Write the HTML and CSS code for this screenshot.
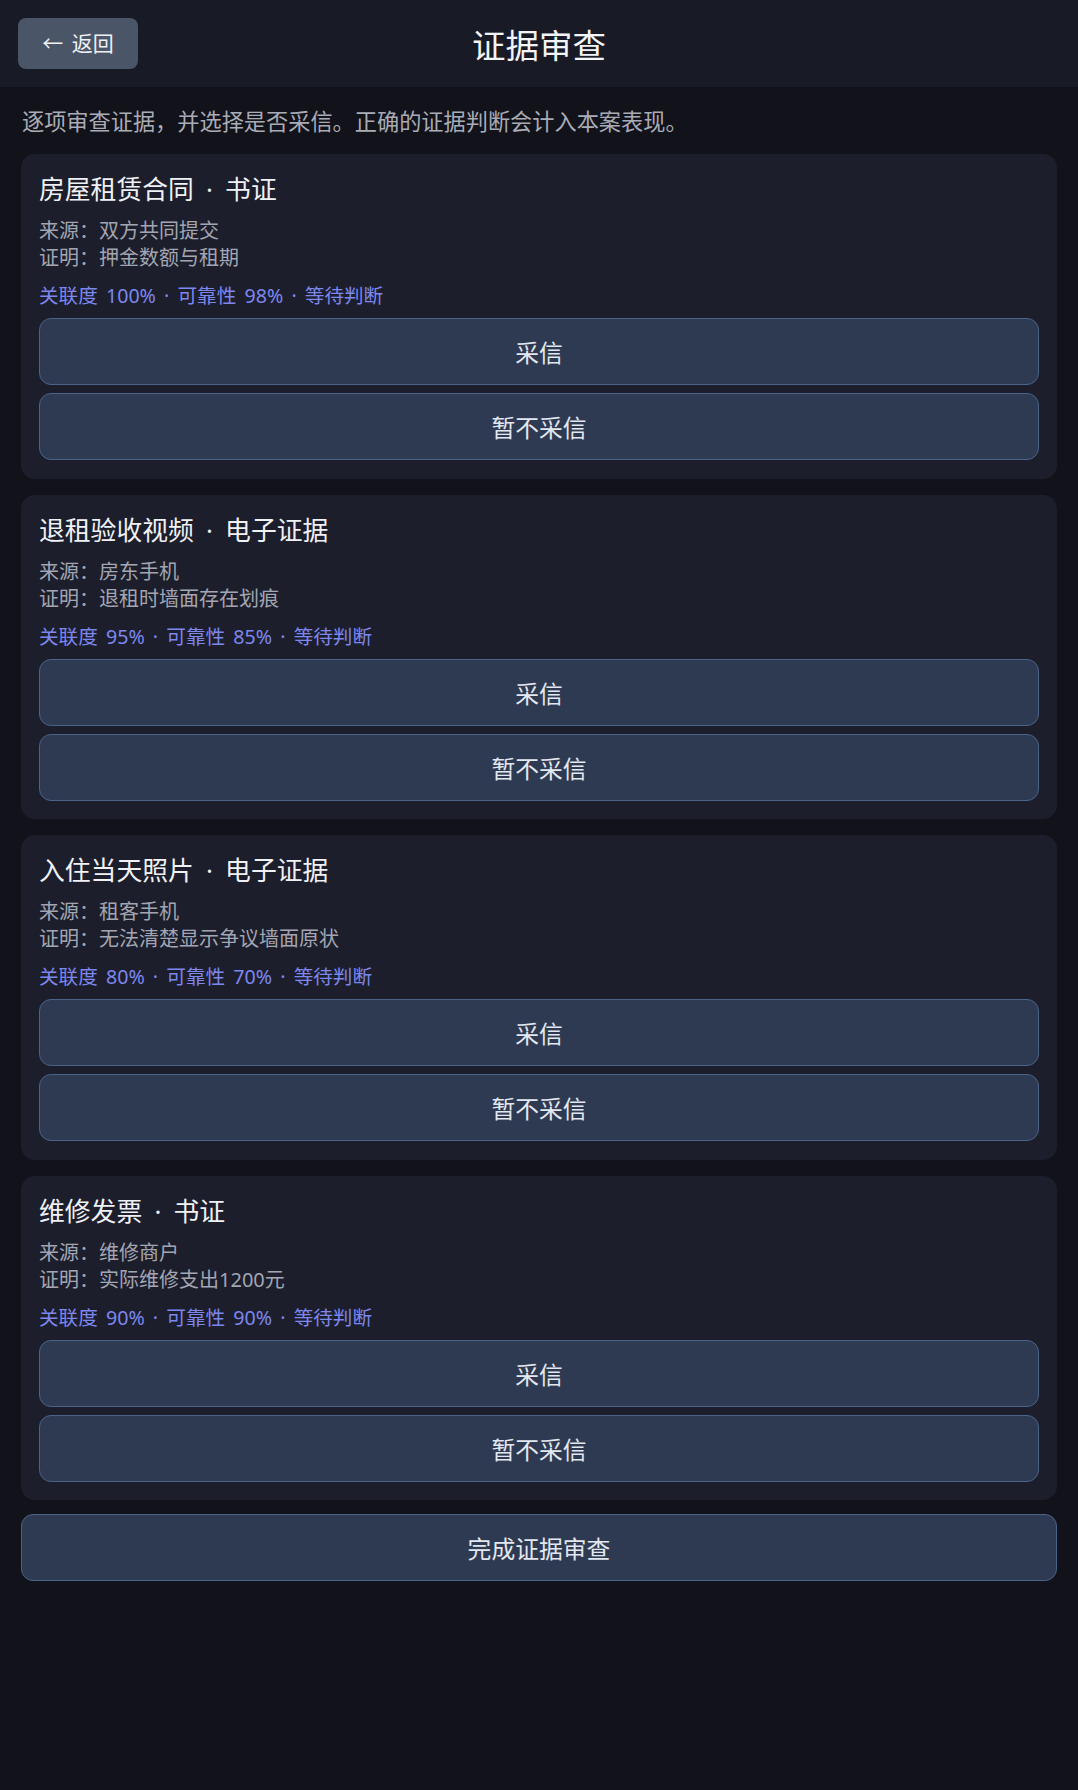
FILE: index.html
```html
<!DOCTYPE html>
<html lang="zh-CN">
<head>
<meta charset="utf-8">
<title>证据审查</title>
<link rel="stylesheet" href="styles.css">
</head>
<body>
<header class="topbar">
  <div class="topbar-left"><button class="back-btn">← 返回</button></div>
  <h1 class="page-title">证据审查</h1>
  <div class="topbar-right"></div>
</header>
<main class="content">
  <p class="intro">逐项审查证据，并选择是否采信。正确的证据判断会计入本案表现。</p>

  <section class="card">
    <h2 class="card-title">房屋租赁合同 · 书证</h2>
    <div class="desc">
      <div>来源：双方共同提交</div>
      <div>证明：押金数额与租期</div>
    </div>
    <div class="meta">关联度 100% · 可靠性 98% · 等待判断</div>
    <div class="actions">
      <button class="choice">采信</button>
      <button class="choice">暂不采信</button>
    </div>
  </section>

  <section class="card">
    <h2 class="card-title">退租验收视频 · 电子证据</h2>
    <div class="desc">
      <div>来源：房东手机</div>
      <div>证明：退租时墙面存在划痕</div>
    </div>
    <div class="meta">关联度 95% · 可靠性 85% · 等待判断</div>
    <div class="actions">
      <button class="choice">采信</button>
      <button class="choice">暂不采信</button>
    </div>
  </section>

  <section class="card">
    <h2 class="card-title">入住当天照片 · 电子证据</h2>
    <div class="desc">
      <div>来源：租客手机</div>
      <div>证明：无法清楚显示争议墙面原状</div>
    </div>
    <div class="meta">关联度 80% · 可靠性 70% · 等待判断</div>
    <div class="actions">
      <button class="choice">采信</button>
      <button class="choice">暂不采信</button>
    </div>
  </section>

  <section class="card">
    <h2 class="card-title">维修发票 · 书证</h2>
    <div class="desc">
      <div>来源：维修商户</div>
      <div>证明：实际维修支出1200元</div>
    </div>
    <div class="meta">关联度 90% · 可靠性 90% · 等待判断</div>
    <div class="actions">
      <button class="choice">采信</button>
      <button class="choice">暂不采信</button>
    </div>
  </section>

  <button class="finish">完成证据审查</button>
</main>
</body>
</html>
```

FILE: styles.css
```css
* { box-sizing: border-box; }
html, body {
  margin: 0;
  padding: 0;
  background: #12121a;
}
body {
  font-family: "Noto Sans", "Noto Sans CJK SC", sans-serif;
  color: #eceef3;
  min-height: 1790px;
}
button {
  font-family: inherit;
  cursor: pointer;
}
.topbar {
  display: grid;
  grid-template-columns: 1fr auto 1fr;
  align-items: center;
  height: 87px;
  padding: 0 18px;
  background: #181a26;
}
.back-btn {
  height: 51px;
  width: 120px;
  padding: 0;
  border: none;
  border-radius: 8px;
  background: #4a5568;
  color: #eef0f4;
  font-size: 21px;
  line-height: 51px;
  word-spacing: 3px;
}
.page-title {
  margin: 0;
  font-size: 33.5px;
  font-weight: 400;
  color: #f3f4f7;
}
.content {
  padding: 18px 21px 40px;
}
.intro {
  margin: 0 0 16px;
  padding-left: 1px;
  font-size: 22.2px;
  line-height: 33px;
  color: #a9acb6;
}
.card {
  background: #1c1e2c;
  border-radius: 14px;
  padding: 18px 18px 18.6px;
  margin-bottom: 16px;
}
.card-title {
  margin: 0 0 10px;
  font-size: 25.8px;
  line-height: 35px;
  font-weight: 400;
  color: #f0f1f5;
  word-spacing: 5.5px;
}
.desc {
  font-size: 20px;
  line-height: 27px;
  color: #a3a6b2;
}
.meta {
  margin-top: 11px;
  font-size: 19.6px;
  line-height: 27px;
  color: #7d87ee;
  word-spacing: 3.1px;
}
.actions {
  margin-top: 9px;
  display: flex;
  flex-direction: column;
  gap: 8px;
}
.choice, .finish {
  display: block;
  width: 100%;
  height: 67px;
  border: 1.5px solid #4a6387;
  border-radius: 12px;
  background: #2e3a52;
  color: #e3e7ef;
  font-size: 23.8px;
}
.finish {
  margin-top: -2.5px;
}
```
